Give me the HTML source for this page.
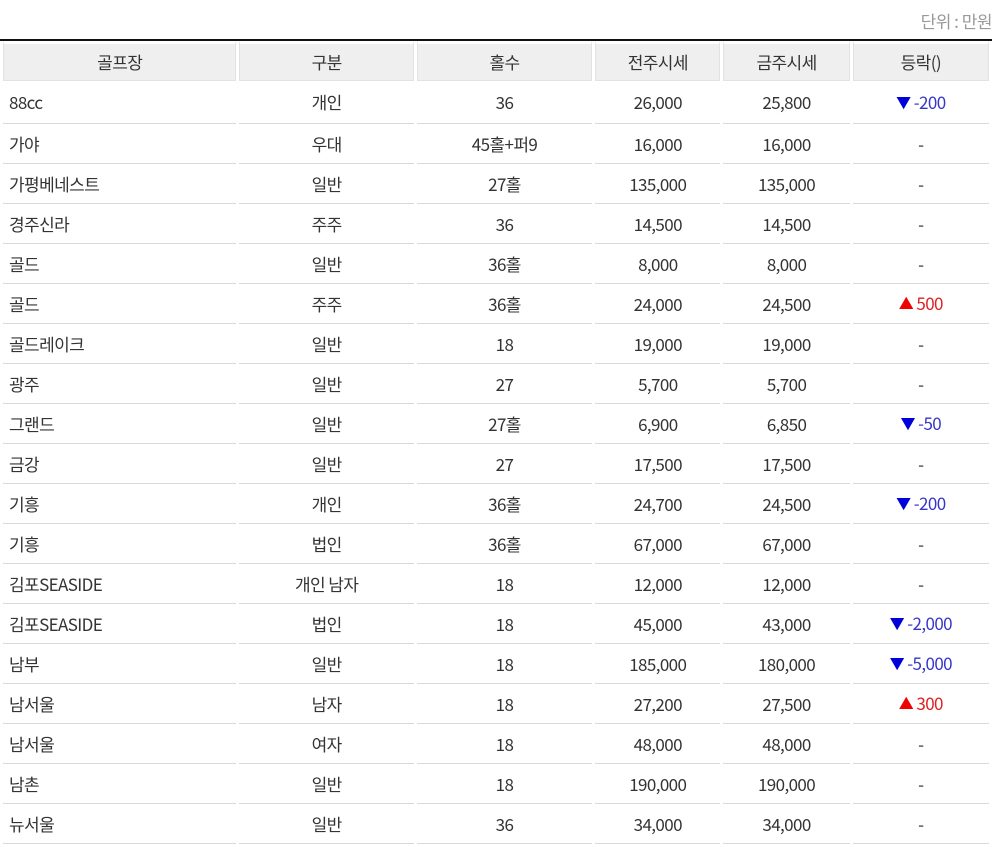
<!DOCTYPE html>
<html><head><meta charset="utf-8"><style>
body{margin:0;background:#fff;font-family:"Noto Sans CJK KR","Liberation Sans",sans-serif;color:#333;}
.unit{position:absolute;top:8px;right:8px;font-size:17px;color:#999;letter-spacing:-0.5px}
table{position:absolute;top:39px;left:0;width:992px;border-top:2px solid #111;border-collapse:separate;border-spacing:3px 0;table-layout:fixed;font-size:17px;letter-spacing:-0.6px}
th{background:#efefef;font-weight:normal;height:36px;border:1px solid #e2e2e2;padding:0;line-height:20px}
tr.h th{border-top:3px solid #fff;}
td{height:39px;border-bottom:1px solid #d8d8d8;text-align:center;padding:0;line-height:20px}
tr.f td{height:42px}
td:first-child{text-align:left;padding-left:6px;}
.dn{color:#3636c8}.dn b{color:#0000d8;font-weight:normal;font-size:15px;vertical-align:1px}
.up{color:#e02020}.up b{color:#f00000;font-weight:normal;font-size:15px;vertical-align:1px}
</style></head><body>
<div class="unit">단위 : 만원</div>
<table>
<colgroup><col style="width:233px"><col style="width:174px"><col style="width:175px"><col style="width:125px"><col style="width:126px"><col style="width:136px"></colgroup>
<tr class="h"><th>골프장</th><th>구분</th><th>홀수</th><th>전주시세</th><th>금주시세</th><th>등락()</th></tr>
<tr class="f"><td>88cc</td><td>개인</td><td>36</td><td>26,000</td><td>25,800</td><td class="dn"><b>▼</b> -200</td></tr>
<tr><td>가야</td><td>우대</td><td>45홀+퍼9</td><td>16,000</td><td>16,000</td><td>-</td></tr>
<tr><td>가평베네스트</td><td>일반</td><td>27홀</td><td>135,000</td><td>135,000</td><td>-</td></tr>
<tr><td>경주신라</td><td>주주</td><td>36</td><td>14,500</td><td>14,500</td><td>-</td></tr>
<tr><td>골드</td><td>일반</td><td>36홀</td><td>8,000</td><td>8,000</td><td>-</td></tr>
<tr><td>골드</td><td>주주</td><td>36홀</td><td>24,000</td><td>24,500</td><td class="up"><b>▲</b> 500</td></tr>
<tr><td>골드레이크</td><td>일반</td><td>18</td><td>19,000</td><td>19,000</td><td>-</td></tr>
<tr><td>광주</td><td>일반</td><td>27</td><td>5,700</td><td>5,700</td><td>-</td></tr>
<tr><td>그랜드</td><td>일반</td><td>27홀</td><td>6,900</td><td>6,850</td><td class="dn"><b>▼</b> -50</td></tr>
<tr><td>금강</td><td>일반</td><td>27</td><td>17,500</td><td>17,500</td><td>-</td></tr>
<tr><td>기흥</td><td>개인</td><td>36홀</td><td>24,700</td><td>24,500</td><td class="dn"><b>▼</b> -200</td></tr>
<tr><td>기흥</td><td>법인</td><td>36홀</td><td>67,000</td><td>67,000</td><td>-</td></tr>
<tr><td>김포SEASIDE</td><td>개인 남자</td><td>18</td><td>12,000</td><td>12,000</td><td>-</td></tr>
<tr><td>김포SEASIDE</td><td>법인</td><td>18</td><td>45,000</td><td>43,000</td><td class="dn"><b>▼</b> -2,000</td></tr>
<tr><td>남부</td><td>일반</td><td>18</td><td>185,000</td><td>180,000</td><td class="dn"><b>▼</b> -5,000</td></tr>
<tr><td>남서울</td><td>남자</td><td>18</td><td>27,200</td><td>27,500</td><td class="up"><b>▲</b> 300</td></tr>
<tr><td>남서울</td><td>여자</td><td>18</td><td>48,000</td><td>48,000</td><td>-</td></tr>
<tr><td>남촌</td><td>일반</td><td>18</td><td>190,000</td><td>190,000</td><td>-</td></tr>
<tr><td>뉴서울</td><td>일반</td><td>36</td><td>34,000</td><td>34,000</td><td>-</td></tr>
</table>
</body></html>
